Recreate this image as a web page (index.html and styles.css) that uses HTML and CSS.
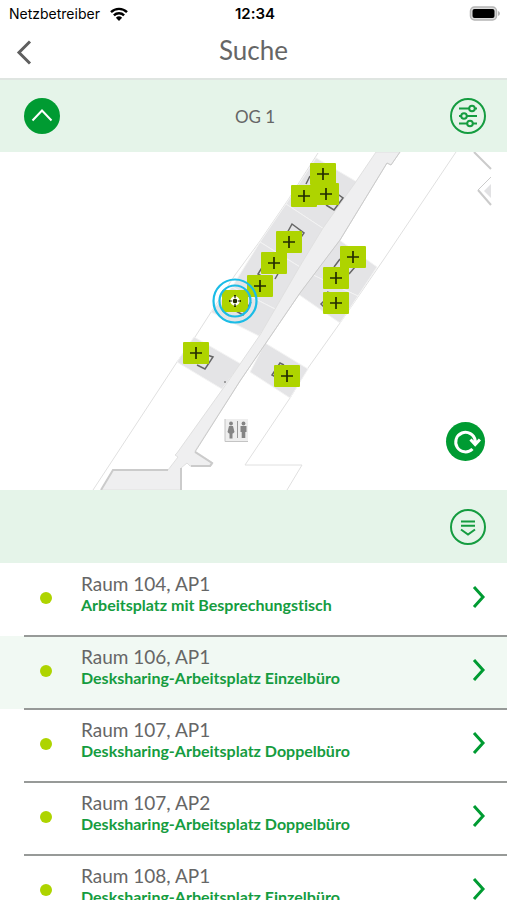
FILE: index.html
```html
<!DOCTYPE html>
<html lang="de">
  <head>
    <meta charset="UTF-8" />
    <meta name="viewport" content="width=device-width, initial-scale=1.0" />
    <title>Suche</title>
    <link rel="stylesheet" href="styles.css">
  </head>
  <body>
    <div class="status-bar">
      <div class="carrier">
        <span>Netzbetreiber</span>
        <svg width="18" height="14" viewBox="0 0 18 14" fill="none" stroke="#000" stroke-width="2.4">
          <path d="M1 5.2a11.4 11.4 0 0 1 16 0" />
          <path d="M3.9 8.4a7.2 7.2 0 0 1 10.200 0" />
          <path d="M9 14l-3.100-3.200a4.500 4.500 0 0 1 6.200 0z" fill="#000" stroke="none" />
        </svg>
      </div>
      <span class="time">12:34</span>
      <svg class="battery" width="32" height="16" viewBox="0 0 32 16">
        <rect x="1.500" y="1" width="26" height="13" rx="4" fill="#ddd" stroke="#b5b5b5" stroke-width="1.500" />
        <rect x="3.500" y="3" width="22" height="9" rx="2" />
        <path d="M29 5q2 .8 2 2.500t-2 2.500z" fill="#b5b5b5" />
      </svg>
    </div>

    <header class="header">
      <a href="#" class="back-button" aria-label="Zurück">
        <svg width="18" height="26" viewBox="0 0 18 26"><path d="M16 1.500L5 12.500l11 11" /></svg>
      </a>
      <h1>Suche</h1>
    </header>

    <div class="toolbar">
      <button class="round-button filled" aria-label="Etage nach oben">
        <svg width="36" height="36" viewBox="0 0 36 36"><path d="M8.500 22.500L18 12.500l9.500 10" /></svg>
      </button>
      <span class="floor">OG 1</span>
      <button class="round-button" aria-label="Filter">
        <svg width="36" height="36" viewBox="0 0 36 36">
          <circle cx="18" cy="18" r="17" />
          <path d="M9 10.500h10M25 10.500h2M9 18h2M17 18h10M9 25.500h8M23 25.500h4" />
          <circle cx="22" cy="10.500" r="2.800" />
          <circle cx="14" cy="18" r="2.800" />
          <circle cx="20" cy="25.500" r="2.800" />
        </svg>
      </button>
    </div>

    <div class="map">
      <svg class="plan" viewBox="0 152 507 338">
        <defs>
          <g id="marker">
            <rect x="-13" y="-11" width="26" height="22" rx="1" fill="#aed400" />
            <path d="M-6 0H6M0-6V6" stroke="#222b00" stroke-width="1.700" />
          </g>
        </defs>

        <!-- outer walls -->
        <g class="wall">
          <path d="M318 153L288 200 260 241 235 275 195 337 177 362 93 490" />
          <path d="M456 152L384 259 340 323 308 368 290 398 245 465H302L287 490" />
        </g>

        <!-- rooms -->
        <g class="room">
          <path d="M316 158L357 182 324 229 286 204z" />
          <path d="M286 204L324 229 300 267 260 242z" />
          <path d="M260 242L300 267 277 310 232 287z" />
          <path d="M232 287L277 310 259 336 211 312z" />
          <path d="M194 337L241 364 222 389 177 362z" />
          <path d="M338 239L377 267 358 296 313 275z" />
          <path d="M313 275L358 296 340 323 298 294z" />
          <path d="M265 343L308 369 290 398 250 372z" />
        </g>

        <!-- corridor -->
        <path class="corridor" d="M376 152L355 183 323 228 300 266 260 335 227 383 177 453l-2 2 3 2-10 13h-55l-12 20h80v-22l6-5 3 3h21l2-3-18-12L240 381 300 293 340 240 387 163l4 2 9-13z" />
        <path class="edge" d="M101 490l12-20h55M181 490v-22M191 466h19l2-3-17-11" />
        <path class="edge thin" d="M195 452L240 381 300 293 340 240 387 163l4 2 9-13" />
        <circle cx="225" cy="382" r="1" fill="#888" />

        <!-- building part on the right -->
        <path d="M491 184l-7 7 7 7z" fill="#e2e2e4" />
        <path class="edge" d="M474 152l17 17M478 190l13 15" />
        <path class="edge thin" d="M491 177l-13 13" />

        <!-- desks -->
        <g class="desk">
          <path d="M310 176l-4 8M326 205l8 5 9-12-7-5" />
          <path d="M286 235l6-11 12 9-7 10" />
          <path d="M263 266l-5 8 8 5M275 279l4-7" />
          <path d="M236 311l7 4 8-13" />
          <path d="M204 354l9 3-8 12-8-4" />
          <path d="M340 259l-6 8M349 274l6-7M325 300l-4 4 4 4M327 292l6 2" />
          <path d="M284 365l-4-2-8 12 9 5" />
        </g>

        <!-- toilets -->
        <g>
          <rect x="225" y="419" width="23" height="23" fill="#eee" />
          <path d="M225 419v22.500h23" fill="none" stroke="#c4c4c4" />
          <path d="M237.500 421v17" stroke="#999" />
          <g fill="#858585">
            <circle cx="231" cy="423.500" r="1.900" />
            <path d="M229 426h4l1.500 6-1.500 1.500h-.5v5h-3v-5h-.5l-1.500-1.500z" />
            <circle cx="243.500" cy="423.500" r="1.900" />
            <path d="M240.500 426h6v6h-1.200v6h-3.600v-6h-1.200z" />
          </g>
        </g>

        <!-- workplaces -->
        <a href="#"><use href="#marker" x="304" y="196" /></a>
        <a href="#"><use href="#marker" x="326" y="194" /></a>
        <a href="#"><use href="#marker" x="323" y="174" /></a>
        <a href="#"><use href="#marker" x="289" y="242" /></a>
        <a href="#"><use href="#marker" x="274" y="263" /></a>
        <a href="#"><use href="#marker" x="260" y="286" /></a>
        <a href="#"><use href="#marker" x="353" y="257" /></a>
        <a href="#"><use href="#marker" x="336" y="278" /></a>
        <a href="#"><use href="#marker" x="336" y="303" /></a>
        <a href="#"><use href="#marker" x="196" y="353" /></a>
        <a href="#"><use href="#marker" x="287" y="376" /></a>
        <a href="#" aria-current="true">
          <use href="#marker" x="235" y="301" />
          <circle cx="235" cy="301" r="3.500" fill="none" stroke="#fff" stroke-width="2.500" />
          <circle cx="235" cy="301" r="2.200" fill="#222b00" />
          <path d="M229 301h3M238 301h3M235 295v3M235 304v3" stroke="#222b00" stroke-width="1.200" />
          <g fill="none" stroke="#1bbce6" stroke-width="2.200">
            <circle cx="235" cy="301" r="15.500" />
            <circle cx="235" cy="301" r="21.500" />
          </g>
        </a>
      </svg>

      <button class="round-button filled reload" aria-label="Aktualisieren">
        <svg width="39" height="39" viewBox="0 0 39 39">
          <path d="M26.500 27A9.800 9.800 0 1 1 29.200 18.500V22M24.500 17.500l4.700 5 4.700-5" />
        </svg>
      </button>
    </div>

    <div class="toolbar list-toolbar">
      <button class="round-button" aria-label="Liste einklappen">
        <svg width="36" height="36" viewBox="0 0 36 36">
          <circle cx="18" cy="18" r="17" />
          <path d="M11 12.500h14M11 16.800h14M11 20.500l7 5 7-5" />
        </svg>
      </button>
    </div>

    <ul class="room-list">
      <li>
        <a href="#" class="room-item">
          <span class="dot"></span>
          <span class="room-text">
            <span class="room-name">Raum 104, AP1</span>
            <span class="room-type">Arbeitsplatz mit Besprechungstisch</span>
          </span>
          <svg class="arrow" width="14" height="24" viewBox="0 0 14 24"><path d="M2 2l9 10-9 10" /></svg>
        </a>
      </li>
      <li>
        <a href="#" class="room-item active">
          <span class="dot"></span>
          <span class="room-text">
            <span class="room-name">Raum 106, AP1</span>
            <span class="room-type">Desksharing-Arbeitsplatz Einzelbüro</span>
          </span>
          <svg class="arrow" width="14" height="24" viewBox="0 0 14 24"><path d="M2 2l9 10-9 10" /></svg>
        </a>
      </li>
      <li>
        <a href="#" class="room-item">
          <span class="dot"></span>
          <span class="room-text">
            <span class="room-name">Raum 107, AP1</span>
            <span class="room-type">Desksharing-Arbeitsplatz Doppelbüro</span>
          </span>
          <svg class="arrow" width="14" height="24" viewBox="0 0 14 24"><path d="M2 2l9 10-9 10" /></svg>
        </a>
      </li>
      <li>
        <a href="#" class="room-item">
          <span class="dot"></span>
          <span class="room-text">
            <span class="room-name">Raum 107, AP2</span>
            <span class="room-type">Desksharing-Arbeitsplatz Doppelbüro</span>
          </span>
          <svg class="arrow" width="14" height="24" viewBox="0 0 14 24"><path d="M2 2l9 10-9 10" /></svg>
        </a>
      </li>
      <li>
        <a href="#" class="room-item">
          <span class="dot"></span>
          <span class="room-text">
            <span class="room-name">Raum 108, AP1</span>
            <span class="room-type">Desksharing-Arbeitsplatz Einzelbüro</span>
          </span>
          <svg class="arrow" width="14" height="24" viewBox="0 0 14 24"><path d="M2 2l9 10-9 10" /></svg>
        </a>
      </li>
    </ul>
  </body>
</html>
```
FILE: styles.css
```css
* {
  box-sizing: border-box;
}

body {
  font-family: Lato, sans-serif;
  font-variant-ligatures: none;
  margin: 0;
  height: 100vh;
  display: flex;
  flex-direction: column;
  overflow: hidden;
  background-color: white;
  color: #666;
}

svg {
  display: block;
}

/* Status bar */
.status-bar {
  display: grid;
  grid-template-columns: 1fr auto 1fr;
  align-items: center;
  flex-shrink: 0;
  height: 27px;
  padding: 0 6px 0 9px;
  font-family: Inter, sans-serif;
  font-size: 14px;
  color: black;
}

.carrier {
  display: flex;
  align-items: center;
  gap: 10px;
}

.time {
  font-size: 15px;
  font-weight: 600;
}

.battery {
  justify-self: end;
}

/* Header */
.header {
  display: grid;
  grid-template-columns: 1fr auto 1fr;
  align-items: center;
  flex-shrink: 0;
  height: 53px;
  padding: 0 14px;
  border-bottom: 2px solid #dfe5e1;
}

.header h1 {
  margin: 0;
  font-size: 26px;
  font-weight: normal;
  line-height: 44px;
  padding-bottom: 6px;
}

.back-button path {
  fill: none;
  stroke: #5f5f5f;
  stroke-width: 3;
}

/* Toolbars */
.toolbar {
  display: grid;
  grid-template-columns: 1fr auto 1fr;
  align-items: center;
  flex-shrink: 0;
  height: 72px;
  padding: 0 21px 0 24px;
  background-color: #e5f4e9;
}

.toolbar .round-button:last-child {
  justify-self: end;
}

.list-toolbar {
  display: flex;
  justify-content: flex-end;
  height: 73px;
}

.floor {
  font-size: 17px;
}

.round-button {
  width: 36px;
  height: 36px;
  padding: 0;
  border: none;
  border-radius: 50%;
  background: none;
  cursor: pointer;
}

.round-button svg {
  fill: none;
  stroke: #159c40;
  stroke-width: 2;
}

.round-button.filled {
  background-color: #009b32;
}

.round-button.filled svg {
  stroke: white;
}

/* Map */
.map {
  position: relative;
  flex-shrink: 0;
}

.plan {
  width: 100%;
  height: auto;
}

.wall {
  fill: none;
  stroke: #e0e0e0;
}

.room {
  fill: #e4e4e6;
  stroke: #f3f3f3;
}

.corridor {
  fill: #efeff0;
  stroke: #e0e0e0;
}

.edge {
  fill: none;
  stroke: #cbcbcb;
  stroke-width: 2;
}

.edge.thin {
  stroke-width: 1;
}

.desk {
  fill: none;
  stroke: #666;
  stroke-width: 1.5;
}

.round-button.reload {
  position: absolute;
  right: 22px;
  bottom: 29px;
  width: 39px;
  height: 39px;
}

.round-button.reload svg {
  stroke-width: 3;
}

/* Room list */
.room-list {
  list-style: none;
  margin: 0;
  padding: 0;
}

.room-item {
  display: flex;
  align-items: center;
  position: relative;
  height: 73px;
  padding: 0 21px 4px 40px;
  color: #666;
  text-decoration: none;
}

.room-item.active {
  background-color: #f1f9f3;
}

.room-item::after {
  content: "";
  position: absolute;
  z-index: 1;
  left: 24px;
  right: 0;
  bottom: -1px;
  height: 2px;
  background-color: #979a98;
}

.dot {
  width: 12px;
  height: 12px;
  margin-right: 29px;
  border-radius: 50%;
  background-color: #aed400;
}

.room-text {
  flex: 1;
  display: flex;
  flex-direction: column;
  padding-bottom: 8px;
}

.room-name {
  font-size: 19px;
  line-height: 22px;
}

.room-type {
  font-size: 16px;
  font-weight: bold;
  line-height: 20px;
  color: #159c40;
}

.arrow {
  margin-bottom: 2px;
}

.arrow path {
  fill: none;
  stroke: #009b32;
  stroke-width: 3;
}
```
